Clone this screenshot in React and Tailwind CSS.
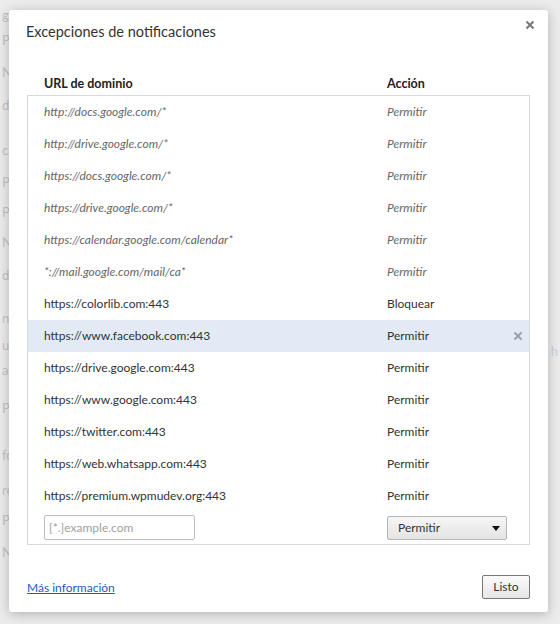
import React from 'react';

const rows = [
  { url: 'http://docs.google.com/*', action: 'Permitir', policy: true },
  { url: 'http://drive.google.com/*', action: 'Permitir', policy: true },
  { url: 'https://docs.google.com/*', action: 'Permitir', policy: true },
  { url: 'https://drive.google.com/*', action: 'Permitir', policy: true },
  { url: 'https://calendar.google.com/calendar*', action: 'Permitir', policy: true },
  { url: '*://mail.google.com/mail/ca*', action: 'Permitir', policy: true },
  { url: 'https://colorlib.com:443', action: 'Bloquear' },
  { url: 'https://www.facebook.com:443', action: 'Permitir', selected: true },
  { url: 'https://drive.google.com:443', action: 'Permitir' },
  { url: 'https://www.google.com:443', action: 'Permitir' },
  { url: 'https://twitter.com:443', action: 'Permitir' },
  { url: 'https://web.whatsapp.com:443', action: 'Permitir' },
  { url: 'https://premium.wpmudev.org:443', action: 'Permitir' },
];

// faint bits of the settings page peeking out behind the dialog
const behind = [
  ['gu', 7], ['P', 9], ['N', 16], ['dr', 17], ['ca', 29], ['P', 16], ['P', 14], ['N', 14],
  ['dr', 17], ['ni', 27], ['ur', 11], ['au', 9], ['P', 22], ['fo', 31], ['re', 19], ['P', 14], ['N', 16],
];

function Close({ className }) {
  return (
    <svg width="10" height="10" viewBox="0 0 10 10" className={className}>
      <path d="M1.5 1.5 L8.5 8.5 M8.5 1.5 L1.5 8.5" stroke="currentColor" strokeWidth="2" />
    </svg>
  );
}

export default function App() {
  return (
    <div className="relative w-[560px] h-[624px] overflow-hidden bg-[#ececec] text-[12px]" style={{ fontFamily: 'Lato, "Liberation Sans", sans-serif' }}>
      <div className="flex flex-col pl-[2px] text-[13px] leading-[16px] text-[#c4c4c4]">
        {behind.map(([t, gap], i) => (
          <div key={i} style={{ marginTop: gap }}>{t}</div>
        ))}
      </div>
      <div className="absolute right-[2px] top-[342px] text-[13px] text-[#c8d4e0]">h</div>

      <div className="absolute left-[9px] top-[10px] w-[539px] h-[602px] bg-white rounded-[3px] shadow-[0_2px_12px_rgba(0,0,0,0.25)] px-[18px] flex flex-col text-[#333]">
        <button className="absolute top-[10px] right-[13px] text-[#777]">
          <Close />
        </button>

        <div className="h-[64px] pt-[12px]">
          <div className="text-[14.5px] leading-[20px] text-[#333] -ml-[1px]">Excepciones de notificaciones</div>
        </div>

        <div className="h-[21px] flex items-center pl-[17px] font-bold text-[12.5px] text-[#222]">
          <div className="w-[343px]">URL de dominio</div>
          <div>Acción</div>
        </div>

        <div className="border border-[#d9d9d9]">
          {rows.map((r) => (
            <div
              key={r.url}
              className={`h-[32px] flex items-center pl-[16px] pr-[6px] ${r.selected ? 'bg-[#e2ebf5]' : ''} ${r.policy ? 'italic text-[#666]' : 'text-[#333]'}`}
            >
              <div className="w-[343px] truncate">{r.url}</div>
              <div className="flex-1">{r.action}</div>
              {r.selected && <Close className="text-[#9aa0a6]" />}
            </div>
          ))}
          <div className="h-[32px] flex items-start pt-[3px] pl-[16px]">
            <div className="w-[343px]">
              <input
                className="w-[151px] h-[25px] border border-[#bdbdbd] rounded-[2px] px-[4px] text-[12px] text-[#333] placeholder:text-[#a0a0a0] outline-none"
                placeholder="[*.]example.com"
              />
            </div>
            <div className="mt-[1px] w-[120px] h-[24px] border border-[#b5b5b5] rounded-[2px] bg-gradient-to-b from-[#f6f6f6] to-[#e4e4e4] flex items-center justify-between pl-[10px] pr-[6px] text-[#333]">
              <span>Permitir</span>
              <svg width="8" height="5" viewBox="0 0 8 5">
                <path d="M0 0 H8 L4 5 Z" fill="#111" />
              </svg>
            </div>
          </div>
        </div>

        <div className="mt-[30px] h-[24px] flex items-center justify-between">
          <a href="#" className="text-[#1b5bc4] underline mt-[2px]">Más información</a>
          <button className="w-[48px] h-[24px] border border-[#777] rounded-[2px] bg-gradient-to-b from-[#fbfbfb] to-[#e6e6e6] text-[#333] text-[12px]">
            Listo
          </button>
        </div>
      </div>
    </div>
  );
}
